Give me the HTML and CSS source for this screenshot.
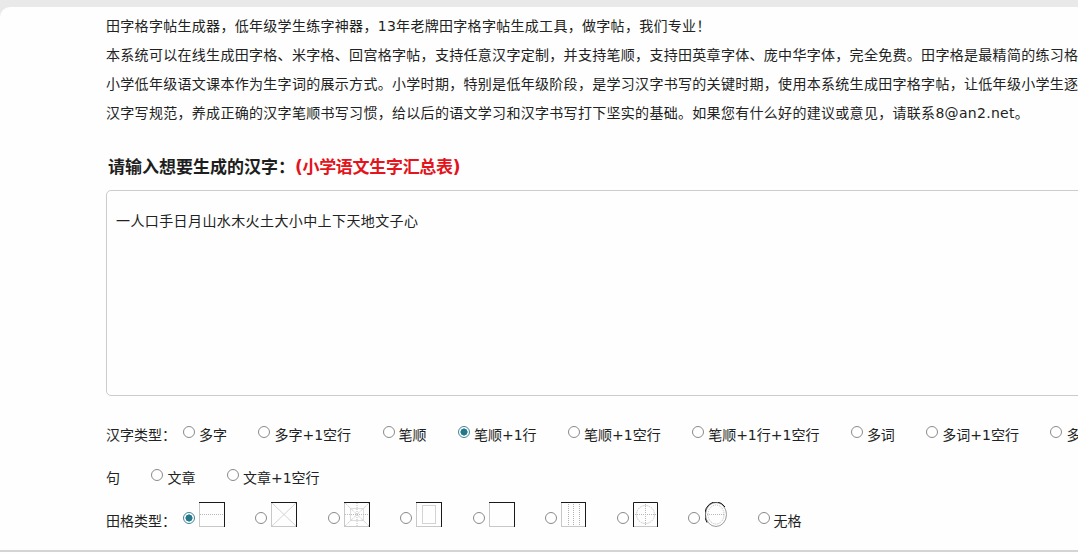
FILE: index.html
```html
<!DOCTYPE html>
<html lang="zh-CN">
<head>
    <meta charset="UTF-8" />
    <meta name="viewport" content="width=device-width, initial-scale=1.0" />
    <title>田字格字帖生成器</title>
    <link rel="stylesheet" href="styles.css">
</head>
<body>
    <div class="page">
        <div class="intro">
            <p>田字格字帖生成器，低年级学生练字神器，13年老牌田字格字帖生成工具，做字帖，我们专业！</p>
            <p>本系统可以在线生成田字格、米字格、回宫格字帖，支持任意汉字定制，并支持笔顺，支持田英章字体、庞中华字体，完全免费。田字格是最精简的练习格式，被广泛用于<br>
            小学低年级语文课本作为生字词的展示方式。小学时期，特别是低年级阶段，是学习汉字书写的关键时期，使用本系统生成田字格字帖，让低年级小学生逐步把<br>
            汉字写规范，养成正确的汉字笔顺书写习惯，给以后的语文学习和汉字书写打下坚实的基础。如果您有什么好的建议或意见，请联系8@an2.net。</p>
        </div>

        <form class="maker">
            <h2 class="title">请输入想要生成的汉字：<span class="red">(小学语文生字汇总表)</span></h2>
            <textarea class="chars">一人口手日月山水木火土大小中上下天地文子心</textarea>

            <div class="row">
                <span class="row-label">汉字类型：</span>
                <label class="opt"><input type="radio" name="type">多字</label>
                <label class="opt"><input type="radio" name="type">多字+1空行</label>
                <label class="opt"><input type="radio" name="type">笔顺</label>
                <label class="opt"><input type="radio" name="type" checked>笔顺+1行</label>
                <label class="opt"><input type="radio" name="type">笔顺+1空行</label>
                <label class="opt"><input type="radio" name="type">笔顺+1行+1空行</label>
                <label class="opt"><input type="radio" name="type">多词</label>
                <label class="opt"><input type="radio" name="type">多词+1空行</label>
                <label class="opt"><input type="radio" name="type">多词句</label>
                <label class="opt"><input type="radio" name="type">文章</label>
                <label class="opt"><input type="radio" name="type">文章+1空行</label>
            </div>

            <div class="row grid-row">
                <span class="row-label">田格类型：</span>
                <label class="opt"><input type="radio" name="grid" checked><svg class="cell" width="26" height="25" viewBox="0 0 26 25">
                    <path d="M0.5 0v25M0 24.5h26" stroke="#c8c8c8"/>
                    <path d="M0 0.5h26M25.5 0v25" stroke="#1a1a1a"/>
                    <path d="M1 12.5h24" stroke="#b8b8b8" stroke-dasharray="1 1"/>
                </svg></label>
                <label class="opt"><input type="radio" name="grid"><svg class="cell" width="26" height="25" viewBox="0 0 26 25">
                    <path d="M0.5 0v25M0 24.5h26" stroke="#c8c8c8"/>
                    <path d="M1 1L25 24M25 1L1 24" stroke="#d4d4d4"/>
                    <path d="M0 0.5h26M25.5 0v25" stroke="#1a1a1a"/>
                </svg></label>
                <label class="opt"><input type="radio" name="grid"><svg class="cell" width="26" height="25" viewBox="0 0 26 25">
                    <path d="M0.5 0v25M0 24.5h26" stroke="#c8c8c8"/>
                    <g stroke="#bcbcbc" stroke-dasharray="1 1" fill="none">
                        <rect x="6.5" y="6.5" width="13" height="12"/>
                        <path d="M1 1L25 24M25 1L1 24M13 1v23M1 12.5h24"/>
                    </g>
                    <path d="M0 0.5h26M25.5 0v25" stroke="#1a1a1a"/>
                </svg></label>
                <label class="opt"><input type="radio" name="grid"><svg class="cell" width="26" height="25" viewBox="0 0 26 25">
                    <path d="M0.5 0v25M0 24.5h26" stroke="#c8c8c8"/>
                    <rect x="6.5" y="3.5" width="13" height="18" fill="none" stroke="#a8a8a8" stroke-dasharray="1 1"/>
                    <path d="M0 0.5h26M25.5 0v25" stroke="#1a1a1a"/>
                </svg></label>
                <label class="opt"><input type="radio" name="grid"><svg class="cell" width="26" height="25" viewBox="0 0 26 25">
                    <path d="M0.5 0v25M0 24.5h26" stroke="#c8c8c8"/>
                    <path d="M0 0.5h26M25.5 0v25" stroke="#1a1a1a"/>
                </svg></label>
                <label class="opt"><input type="radio" name="grid"><svg class="cell" width="25" height="25" viewBox="0 0 25 25">
                    <path d="M0.5 0v25M0 24.5h25" stroke="#c8c8c8"/>
                    <path d="M7.5 2v21M12.5 2v21M18.5 2v21" stroke="#b0b0b0" stroke-dasharray="1 1"/>
                    <path d="M0 0.5h25M24.5 0v25" stroke="#1a1a1a"/>
                </svg></label>
                <label class="opt"><input type="radio" name="grid"><svg class="cell" width="25" height="25" viewBox="0 0 25 25">
                    <path d="M0 24.5h25" stroke="#c8c8c8"/>
                    <g stroke="#b8b8b8" stroke-dasharray="1 1" fill="none">
                        <circle cx="12.5" cy="12.5" r="9"/>
                        <path d="M12.5 2v21M2 12.5h21"/>
                    </g>
                    <path d="M0.5 25V0.5h24V25" stroke="#1a1a1a" fill="none"/>
                </svg></label>
                <label class="opt"><input type="radio" name="grid"><svg class="cell oval" width="22" height="25" viewBox="0 0 22 25">
                    <ellipse cx="11" cy="12.5" rx="10.5" ry="12" fill="none" stroke="#9a9a9a"/>
                    <g stroke="#b8b8b8" stroke-dasharray="1 1" fill="none">
                        <ellipse cx="11" cy="12.5" rx="8" ry="9.5"/>
                        <path d="M2 12.5h18"/>
                    </g>
                    <path d="M2 20.5A10.5 12 0 0 1 20 5" stroke="#111" fill="none"/>
                </svg></label>
                <label class="opt"><input type="radio" name="grid">无格</label>
            </div>
        </form>
    </div>
</body>
</html>
```

FILE: styles.css
```css
body {
    font-family: "DejaVu Sans", "Noto Sans CJK SC", sans-serif;
    font-size: 14px;
    color: #222;
    background-color: #e9e9e9;
    margin: 0;
    padding-top: 7px;
    overflow: hidden;
}

.page {
    background-color: #fdfefd;
    border-top-left-radius: 10px;
    min-height: calc(100vh - 7px);
    padding-left: 106px;
}

.intro {
    padding-top: 5px;
    letter-spacing: 0.3px;
}

.intro p {
    margin: 0;
    line-height: 29px;
    white-space: nowrap;
}

/* 表单区域宽度决定单选项的换行位置 */
.maker {
    border-bottom: 2px solid #d4d4d4;
    padding-bottom: 7px;
    margin-left: -106px;
    padding-left: 106px;
    width: calc(997px + 106px);
    box-sizing: border-box;
}

.title {
    font-size: 17px;
    font-weight: bold;
    line-height: 24px;
    margin: 27px 0 0 2px;
    color: #1e1e1e;
}

.red {
    color: #e3141c;
    letter-spacing: -0.3px;
}

.chars {
    display: block;
    width: 1100px;
    height: 206px;
    box-sizing: border-box;
    margin-top: 11px;
    padding: 20px 9px;
    border: 1px solid #cccccc;
    border-radius: 5px;
    background-color: #fdfefd;
    font-family: "DejaVu Sans", "Noto Sans CJK SC", sans-serif;
    font-size: 14px;
    line-height: 20px;
    letter-spacing: 0.4px;
    color: #222;
    resize: none;
}

.row {
    line-height: 43px;
    margin-top: 18px;
}

.grid-row {
    margin-top: 0;
}

/* 标签之间的空格约 4.5px，这里的间距已扣除 */
.opt {
    margin-left: 27px;
}

.row-label + .opt {
    margin-left: 2.5px;
}

.grid-row .opt {
    margin-left: 26px;
}

.grid-row .row-label + .opt {
    margin-left: 2.5px;
}

.opt input {
    -webkit-appearance: none;
    appearance: none;
    width: 12px;
    height: 12px;
    margin: 0 4px 0 0;
    border: 1px solid #8a8a8a;
    border-radius: 50%;
    background-color: #fff;
    vertical-align: 2px;
    box-sizing: border-box;
}

.opt input:checked {
    border-color: #3f8799;
    background: radial-gradient(circle, #24788a 0 3.3px, #fff 3.8px);
}

.cell {
    vertical-align: -1px;
}

.oval {
    margin-left: 1px;
}
```
